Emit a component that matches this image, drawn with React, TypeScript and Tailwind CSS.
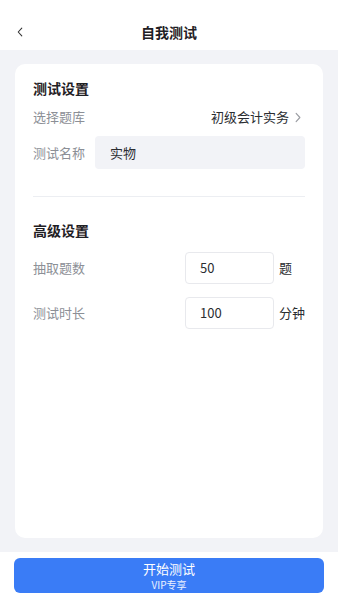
const font = { fontFamily: '"Noto Sans CJK SC", "Noto Sans", sans-serif' };

function Chevron({ dir, className }: { dir: 'left' | 'right'; className?: string }) {
  return (
    <svg viewBox="0 0 8 14" className={className} fill="none" stroke="currentColor" strokeWidth="1.5" strokeLinecap="round" strokeLinejoin="round">
      {dir === 'left' ? <path d="M6.5 1.5 1.5 7l5 5.5" /> : <path d="M1.5 1.5 6.5 7l-5 5.5" />}
    </svg>
  );
}

function NumberRow({ label, value, unit, className }: { label: string; value: string; unit: string; className?: string }) {
  return (
    <div className={`flex items-center ${className ?? ''}`}>
      <span className="text-[13px] text-[#8c8f96] flex-1">{label}</span>
      <div className="w-[89px] h-[32px] border border-[#e8e9ed] rounded-[4px] flex items-center pl-[14px] text-[13px] text-[#2b2d31]">
        {value}
      </div>
      <span className="w-[31px] pl-[5px] text-[13px] text-[#2b2d31]">{unit}</span>
    </div>
  );
}

export default function App() {
  return (
    <div className="w-[338px] h-[600px] flex flex-col bg-white" style={font}>
      <div className="h-[50px] pt-[14px] shrink-0 relative flex items-center justify-center">
        <Chevron dir="left" className="absolute left-[17px] top-[27px] w-[6px] h-[10px] text-[#333]" />
        <span className="text-[14px] font-bold text-[#1f2024]">自我测试</span>
      </div>

      <div className="flex-1 bg-[#f2f3f7] px-[15px] pt-[14px] pb-[14px] flex flex-col">
        <div className="flex-1 bg-white rounded-[10px] px-[18px] pt-[12px]">
          <div className="h-[24px] flex items-center text-[14px] font-bold text-[#1f2024]">测试设置</div>
          <div className="h-[28px] mt-[3px] flex items-center justify-between">
            <span className="text-[13px] text-[#8c8f96]">选择题库</span>
            <span className="flex items-center gap-[6px] text-[13px] text-[#2b2d31] pr-[4px]">
              初级会计实务
              <Chevron dir="right" className="w-[6px] h-[11px] text-[#9a9ca2]" />
            </span>
          </div>
          <div className="mt-[5px] flex items-center">
            <span className="w-[62px] text-[13px] text-[#8c8f96]">测试名称</span>
            <div className="flex-1 h-[33px] bg-[#f2f3f7] rounded-[4px] flex items-center pl-[15px] text-[13px] text-[#2b2d31]">
              实物
            </div>
          </div>
          <div className="mt-[27px] h-px bg-[#eceef2]" />
          <div className="mt-[21px] h-[24px] flex items-center text-[14px] font-bold text-[#1f2024]">高级设置</div>
          <NumberRow label="抽取题数" value="50" unit="题" className="mt-[10px]" />
          <NumberRow label="测试时长" value="100" unit="分钟" className="mt-[13px]" />
        </div>
      </div>

      <div className="h-[48px] shrink-0 px-[14px] pt-[6px]">
        <button className="w-full h-[35px] rounded-[6px] bg-[#3a7cf6] flex flex-col items-center justify-center text-white">
          <span className="text-[13px] leading-[18px]">开始测试</span>
          <span className="text-[10px] leading-[14px] text-white/90">VIP专享</span>
        </button>
      </div>
    </div>
  );
}
